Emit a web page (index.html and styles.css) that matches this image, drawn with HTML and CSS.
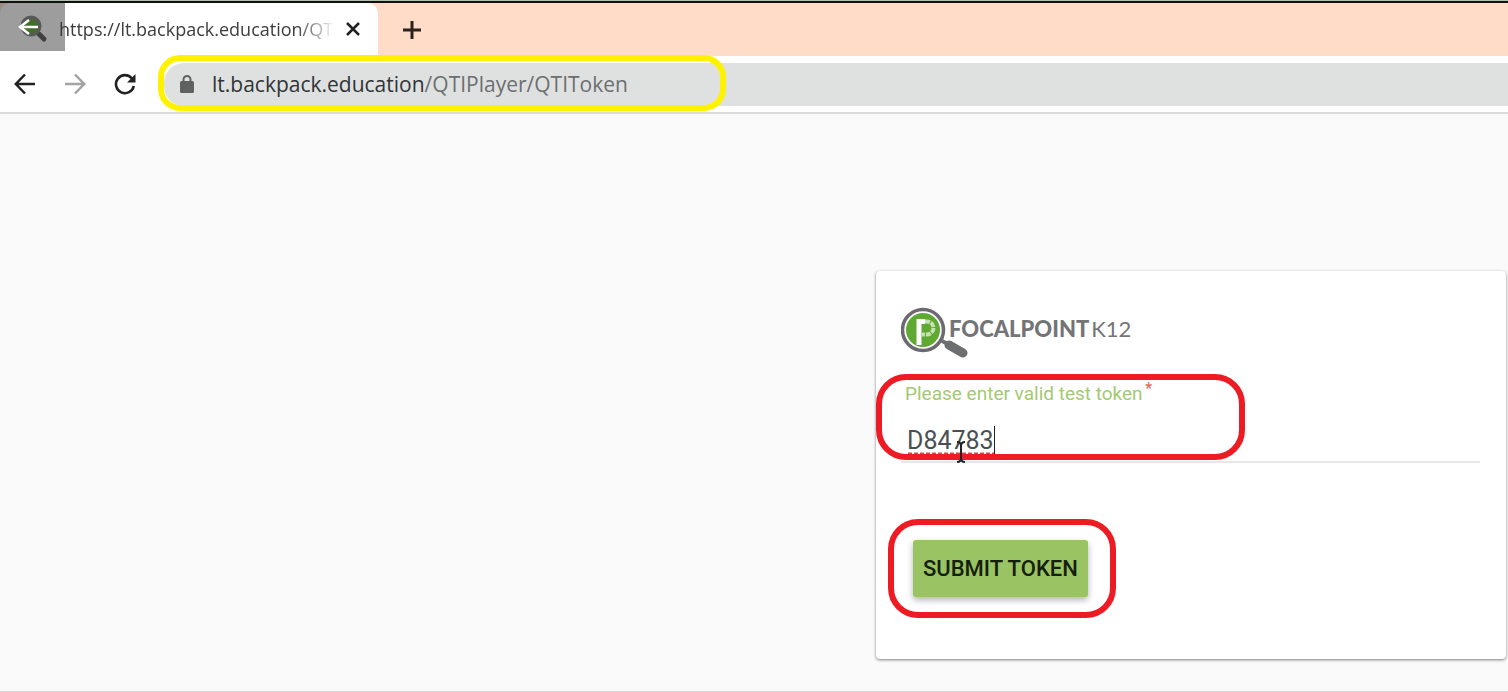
FILE: index.html
```html
<!DOCTYPE html>
<html lang="en">
<head>
  <meta charset="UTF-8" />
  <meta name="viewport" content="width=device-width, initial-scale=1.0"/>
  <title>QTI Token</title>
  <link rel="stylesheet" href="styles.css">
</head>
<body>

<header class="browser">
  <div class="tab-strip">
    <div class="tab">
      <svg class="tab-icon" width="30" height="30" viewBox="0 0 30 30">
        <path d="M19 18L26 25" stroke="#444" stroke-width="5" stroke-linecap="round"/>
        <circle cx="13" cy="12" r="9" fill="#4f9a20" stroke="#777" stroke-width="3"/>
      </svg>
      <span class="tab-title">https://lt.backpack.education/QTI</span>
      <button class="icon-btn tab-close" aria-label="Close tab">
        <svg width="14" height="14" viewBox="0 0 14 14"><path d="M1 1L13 13M13 1L1 13" stroke="#222" stroke-width="2.500"/></svg>
      </button>
      <button class="back-overlay" aria-label="Go back">
        <svg width="20" height="16" viewBox="0 0 20 16" fill="none" stroke="#fff" stroke-width="2.500"><path d="M20 8H2M11 1L2 8L11 15"/></svg>
      </button>
    </div>
    <button class="icon-btn new-tab" aria-label="New tab">
      <svg width="20" height="20" viewBox="0 0 20 20"><path d="M10 1V19M1 10H19" stroke="#2b211c" stroke-width="3"/></svg>
    </button>
  </div>

  <nav class="toolbar">
    <button class="icon-btn" aria-label="Back">
      <svg width="22" height="22" viewBox="0 0 22 22" fill="none" stroke="#222" stroke-width="2.500"><path d="M21 11H2M11 1.500L1.800 11L11 20.500"/></svg>
    </button>
    <button class="icon-btn" aria-label="Forward">
      <svg width="22" height="22" viewBox="0 0 22 22" fill="none" stroke="#a3a3a3" stroke-width="2.500"><path d="M1 11H20M11 1.500L20.200 11L11 20.500"/></svg>
    </button>
    <button class="icon-btn" aria-label="Reload">
      <svg width="22" height="22" viewBox="0 0 22 22"><path d="M18 5.500A9 9 0 1 0 19.800 13" fill="none" stroke="#222" stroke-width="2.600"/><path d="M21.500 1V9.500H13Z" fill="#222"/></svg>
    </button>
    <div class="address">
      <svg width="14" height="18" viewBox="0 0 14 18"><rect y="6" width="14" height="12" rx="1.500" fill="#5f6161"/><path d="M3.500 7V4.500A3.500 3.500 0 0 1 10.500 4.500V7" fill="none" stroke="#5f6161" stroke-width="2"/></svg>
      <span class="url">lt.backpack.education<span class="url-path">/QTIPlayer/QTIToken</span></span>
      <span class="ring ring-yellow"></span>
    </div>
  </nav>
</header>

<main>
  <form class="card">
    <div class="logo">
      <svg width="68" height="52" viewBox="0 0 68 52">
        <path d="M41 34L49 38" stroke="#6d6e70" stroke-width="4"/>
        <path d="M48 38L62 46" stroke="#6d6e70" stroke-width="9" stroke-linecap="round"/>
        <circle cx="22" cy="23" r="20.500" fill="#fff" stroke="#6d6971" stroke-width="3.500"/>
        <circle cx="22" cy="23" r="17" fill="#5fa832"/>
        <path d="M18 38V14.500H24" fill="none" stroke="#fff" stroke-width="5"/>
        <path d="M24 14.500H26A6.500 6.500 0 0 1 26 27.500H21" fill="none" stroke="#c5e2b4" stroke-width="4" stroke-dasharray="5 1"/>
      </svg>
      <span class="brand">FOCALPOINT</span><span class="brand-k12">K12</span>
    </div>

    <div class="field">
      <label for="token">Please enter valid test token <span class="required">*</span></label>
      <input type="text" id="token" name="token" value="D84783" spellcheck="false" />
      <svg class="spelling" width="86" height="4" viewBox="0 0 86 4"><path d="M0 2H86" stroke="#c8504a" stroke-width="3" stroke-dasharray="4 2"/></svg>
      <span class="caret"></span>
      <span class="ring ring-field"></span>
      <svg class="cursor" width="10" height="22" viewBox="0 0 10 22" fill="none" stroke="#222" stroke-width="2"><path d="M1 1Q5 1 5 5V17Q5 21 1 21M9 1Q5 1 5 5M5 17Q5 21 9 21"/></svg>
    </div>

    <div class="actions">
      <button type="submit" class="btn">SUBMIT TOKEN</button>
      <span class="ring ring-submit"></span>
    </div>
  </form>
</main>

</body>
</html>
```
FILE: styles.css
```css
* {
  box-sizing: border-box;
}

body {
  font-family: Roboto, sans-serif;
  margin: 0;
  min-height: 100vh;
  display: flex;
  flex-direction: column;
  background: #fafafa;
}

svg {
  display: block;
  flex-shrink: 0;
}

.browser {
  font-family: "Open Sans", sans-serif;
  background: #fff;
  border-top: 1px solid #b4bdb4;
  border-bottom: 2px solid #dcdcdc;
}

.tab-strip {
  display: flex;
  align-items: stretch;
  height: 55px;
  border-top: 2px solid #111;
  background: #ffdcc8;
}

.tab {
  position: relative;
  display: flex;
  align-items: center;
  width: 378px;
  padding: 0 18px 2px;
  background: #fff;
  border-radius: 10px 10px 0 0;
}

.tab-title {
  width: 276px;
  margin-left: 11px;
  white-space: nowrap;
  font-size: 18px;
  color: #3c3c3c;
  mask-image: linear-gradient(to right, #000 86%, transparent);
}

.icon-btn {
  padding: 0;
  border: none;
  background: none;
  cursor: pointer;
}

.tab-close {
  margin-left: 11px;
}

.new-tab {
  margin-left: 24px;
}

.back-overlay {
  position: absolute;
  top: 0;
  left: 0;
  width: 65px;
  height: 48px;
  padding: 0 18px;
  border: none;
  background: rgba(60, 60, 60, 0.5);
}

.toolbar {
  display: flex;
  align-items: center;
  gap: 28px;
  height: 56px;
  padding-left: 14px;
}

.address {
  position: relative;
  flex: 1;
  display: flex;
  align-items: center;
  gap: 18px;
  height: 43px;
  padding-left: 16px;
  background: #dfe1e1;
  border-radius: 20px 0 0 20px;
}

.url {
  font-size: 21px;
  color: #2f3437;
}

.url-path {
  color: #6c6f70;
}

.ring {
  position: absolute;
  border: 6px solid #ed1c24;
  border-radius: 30px;
  pointer-events: none;
}

.ring-yellow {
  top: -8px;
  left: -6px;
  width: 568px;
  height: 56px;
  border-color: #fff200;
  border-radius: 22px;
}

main {
  flex: 1;
  display: flex;
  justify-content: flex-end;
  align-items: flex-start;
  padding: 157px 2px 31px 16px;
  border-bottom: 1px solid #d8d8d8;
}

.card {
  width: 630px;
  padding: 36px 26px 62px 25px;
  background: #fff;
  border-radius: 4px;
  box-shadow: 0 1px 3px rgba(0, 0, 0, 0.5);
}

.logo {
  display: flex;
  align-items: flex-start;
}

.brand,
.brand-k12 {
  font-family: Lato, sans-serif;
  font-size: 22px;
  line-height: 44px;
  color: #737476;
}

.brand {
  margin-left: -20px;
  font-weight: 900;
}

.brand-k12 {
  margin-left: 2px;
  font-weight: 400;
}

.field {
  position: relative;
  padding-top: 22px;
}

label {
  display: block;
  padding-left: 4px;
  font-size: 19px;
  line-height: 26px;
  color: #a3c971;
}

.required {
  display: inline-block;
  margin-left: -2px;
  font-size: 16px;
  line-height: 16px;
  vertical-align: top;
  color: #e8604c;
}

input {
  display: block;
  width: 100%;
  height: 56px;
  padding: 12px 6px 0;
  border: none;
  border-bottom: 2px solid #e8e8e8;
  outline: none;
  background: transparent;
  font-family: inherit;
  font-size: 25px;
  color: #4a4f54;
}

.spelling {
  position: absolute;
  left: 7px;
  bottom: 7px;
}

.caret {
  position: absolute;
  left: 93px;
  bottom: 9px;
  width: 1px;
  height: 28px;
  background: #222;
}

.cursor {
  position: absolute;
  left: 55px;
  bottom: 0;
}

.ring-field {
  top: 15px;
  left: -25px;
  width: 369px;
  height: 86px;
}

.actions {
  position: relative;
  width: fit-content;
  margin: 77px 0 0 12px;
}

.btn {
  display: block;
  height: 57px;
  padding: 0 10px;
  border: none;
  border-radius: 3px;
  background: #9ac363;
  box-shadow: 0 3px 6px rgba(60, 60, 90, 0.4);
  color: #14200c;
  font-family: inherit;
  font-size: 22px;
  font-weight: 500;
  cursor: pointer;
}

.ring-submit {
  top: -21px;
  left: -25px;
  width: 228px;
  height: 99px;
}
```
